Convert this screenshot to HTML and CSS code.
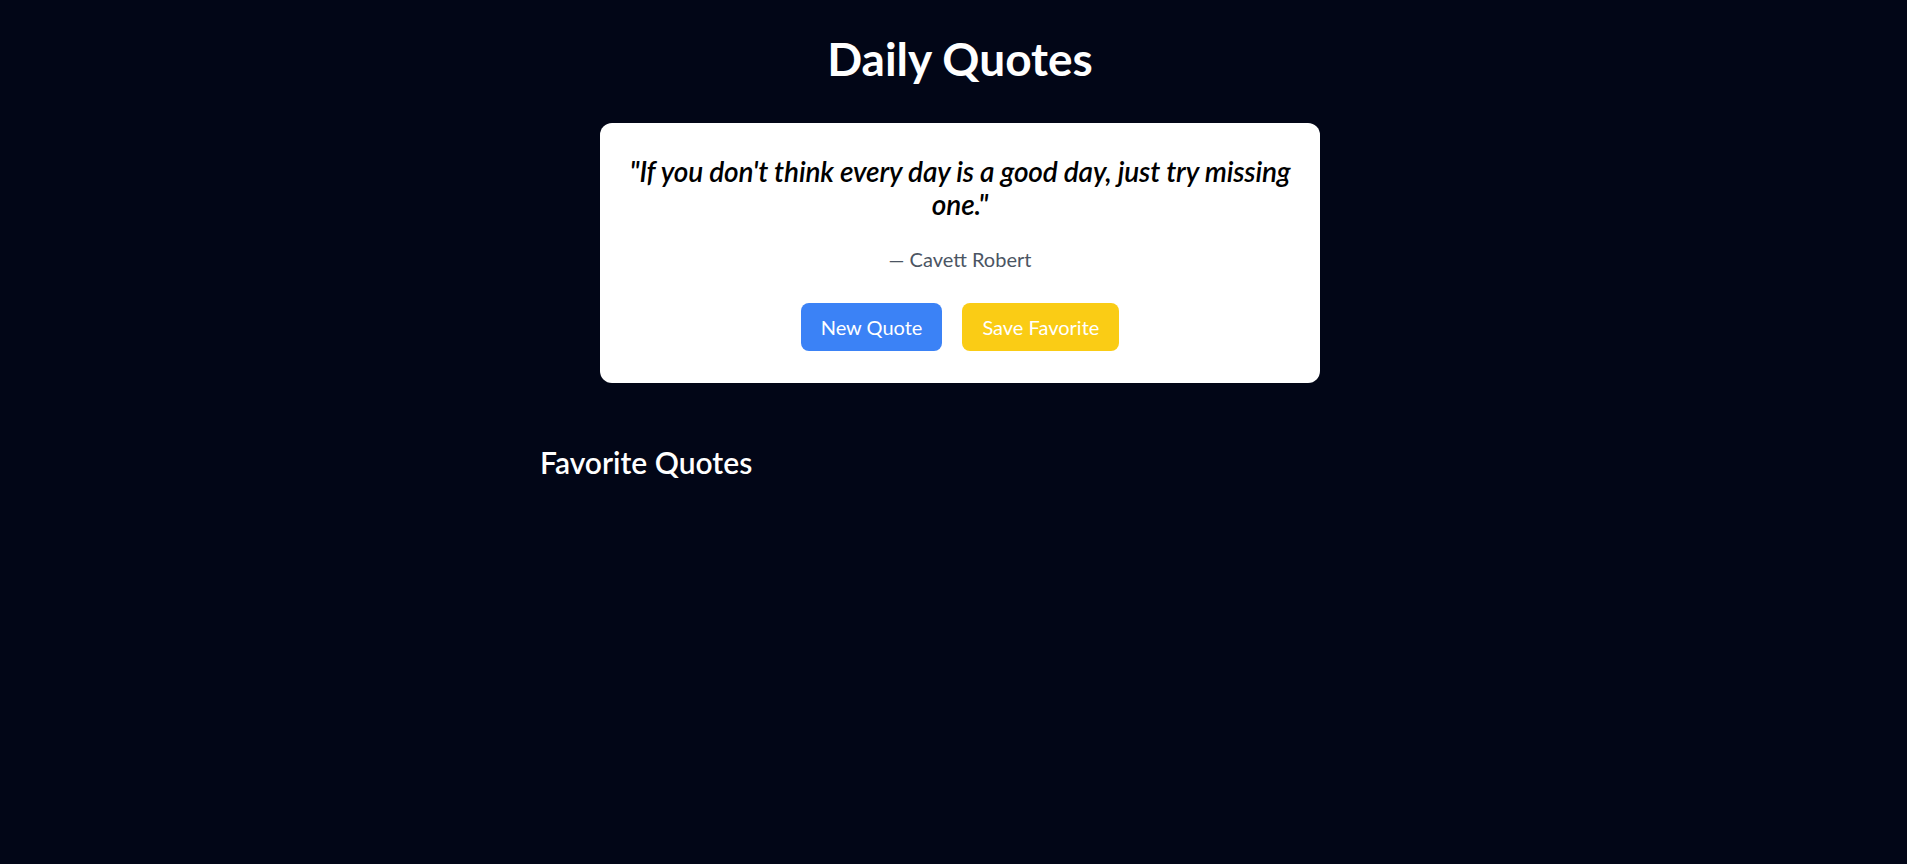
FILE: index.html
```html
<!DOCTYPE html>
<html lang="en">
<head>
<meta charset="utf-8">
<title>Daily Quotes</title>
<link rel="stylesheet" href="styles.css">
</head>
<body>
<main class="page">
  <h1 class="title">Daily Quotes</h1>
  <div class="card">
    <p class="quote">"If you don't think every day is a good day, just try missing one."</p>
    <p class="author">— Cavett Robert</p>
    <div class="actions">
      <button class="btn btn-blue" type="button">New Quote</button>
      <button class="btn btn-yellow" type="button">Save Favorite</button>
    </div>
  </div>
  <section class="favorites">
    <h2 class="fav-title">Favorite Quotes</h2>
  </section>
</main>
</body>
</html>
```

FILE: styles.css
```css
html, body {
  margin: 0;
  padding: 0;
  background: #020617;
  min-height: 100%;
}
body {
  font-family: Lato, "Open Sans", sans-serif;
  color: #ffffff;
}
.page {
  display: flex;
  flex-direction: column;
  align-items: center;
  padding-top: 32px;
  padding-left: 13px;
}
.title {
  margin: 0 0 37px;
  font-size: 46px;
  line-height: 54px;
  font-weight: 700;
  color: #ffffff;
}
.card {
  width: 720px;
  box-sizing: border-box;
  background: #ffffff;
  border-radius: 12px;
  padding: 32px 24px;
  text-align: center;
}
.quote {
  margin: 0 0 24px;
  font-size: 28px;
  line-height: 33px;
  font-style: italic;
  font-weight: 600;
  letter-spacing: -0.15px;
  color: #000000;
}
.author {
  margin: 0 0 30px;
  font-size: 20px;
  line-height: 28px;
  color: #4b5563;
}
.actions {
  display: flex;
  justify-content: center;
  gap: 20px;
}
.btn {
  height: 48px;
  padding: 0 20px;
  border: none;
  border-radius: 8px;
  font-family: inherit;
  font-size: 20px;
  color: #ffffff;
  cursor: pointer;
}
.btn-blue { background: #3b82f6; }
.btn-yellow { background: #facc15; }
.favorites {
  width: 840px;
  margin-top: 61px;
}
.fav-title {
  margin: 0;
  font-size: 30px;
  line-height: 36px;
  font-weight: 600;
  color: #ffffff;
}
```
